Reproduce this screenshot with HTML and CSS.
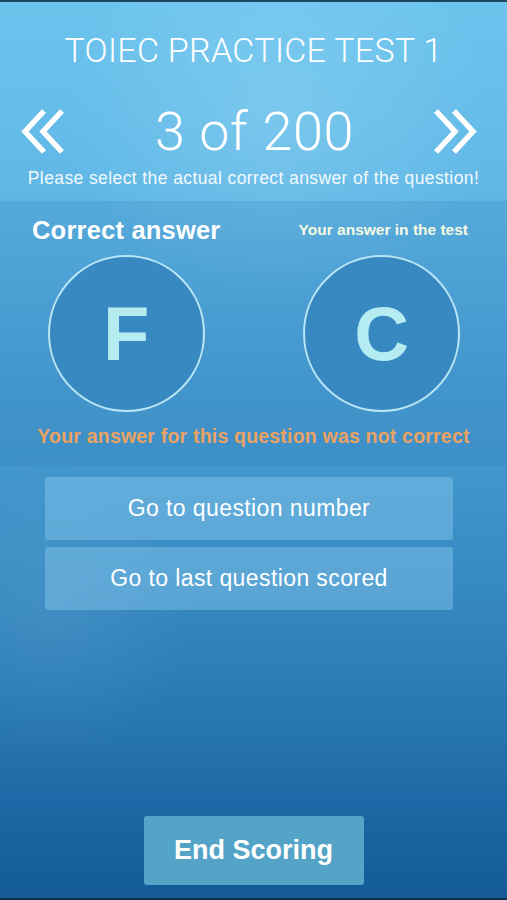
FILE: index.html
```html
<!DOCTYPE html>
<html lang="en">
<head>
<meta charset="utf-8">
<title>TOIEC Practice Test 1</title>
<link rel="stylesheet" href="styles.css">
</head>
<body>
<div class="screen">
  <h1 class="title">TOIEC PRACTICE TEST 1</h1>
  <div class="nav">
    <svg class="chev" viewBox="0 0 44 46" aria-hidden="true">
      <polyline points="22,2 3,22.5 22,43" />
      <polyline points="40,2 21,22.5 40,43" />
    </svg>
    <div class="count">3 of 200</div>
    <svg class="chev" viewBox="0 0 44 46" aria-hidden="true">
      <polyline points="4,2 23,22.5 4,43" />
      <polyline points="22,2 41,22.5 22,43" />
    </svg>
  </div>
  <p class="hint">Please select the actual correct answer of the question!</p>

  <section class="band">
    <div class="labels">
      <span class="label-main">Correct answer</span>
      <span class="label-sub">Your answer in the test</span>
    </div>
    <div class="answers">
      <div class="cell"><div class="circle">F</div></div>
      <div class="cell"><div class="circle">C</div></div>
    </div>
    <p class="verdict">Your answer for this question was not correct</p>
  </section>

  <div class="actions">
    <button class="btn">Go to question number</button>
    <button class="btn">Go to last question scored</button>
  </div>

  <div class="spacer"></div>

  <div class="end-wrap">
    <button class="end">End Scoring</button>
  </div>
</div>
</body>
</html>
```

FILE: styles.css
```css
html, body {
  margin: 0;
  padding: 0;
}

body {
  width: 507px;
  height: 900px;
  overflow: hidden;
  font-family: "Liberation Sans", Arial, sans-serif;
  color: #ffffff;
}

.screen {
  box-sizing: border-box;
  height: 900px;
  display: flex;
  flex-direction: column;
  border-top: 2px solid #1d4660;
  border-bottom: 2px solid #0c2f4d;
  background:
    radial-gradient(ellipse 60% 30% at 55% 12%, rgba(170, 225, 248, 0.3), rgba(170, 225, 248, 0) 70%),
    radial-gradient(ellipse 40% 25% at 10% 68%, rgba(120, 180, 220, 0.18), rgba(120, 180, 220, 0) 70%),
    linear-gradient(180deg, #6cc4ed 0%, #61b8e6 20%, #4a9fd4 42%, #3a8dc4 62%, #2a79b4 78%, #1a64a2 92%, #145b98 100%);
}

.title {
  margin: 28px 0 0;
  font-family: Roboto, "Liberation Sans", sans-serif;
  font-weight: 300;
  font-size: 34px;
  line-height: 40px;
  letter-spacing: 0.3px;
  text-align: center;
}

.nav {
  margin-top: 37px;
  display: flex;
  align-items: center;
  justify-content: space-between;
  padding: 0 30px 0 21px;
  height: 50px;
}

.chev {
  width: 46px;
  height: 46px;
  fill: none;
  stroke: #ffffff;
  stroke-width: 5.5;
  stroke-linecap: butt;
  stroke-linejoin: miter;
}

.count {
  margin-left: 11px;
  font-family: Roboto, "Liberation Sans", sans-serif;
  font-weight: 300;
  font-size: 54px;
  line-height: 50px;
  letter-spacing: 0.6px;
}

.hint {
  margin: 11px 0 0;
  font-size: 17.5px;
  letter-spacing: 0.4px;
  line-height: 20px;
  text-align: center;
  color: #f2f9fd;
}

.band {
  margin-top: 13px;
  height: 264px;
  box-sizing: border-box;
  background: rgba(30, 100, 160, 0.14);
  padding-top: 14px;
}

.labels {
  display: flex;
  justify-content: space-between;
  align-items: center;
  padding: 0 39px 0 32px;
}

.label-main {
  font-size: 25.5px;
  font-weight: bold;
  line-height: 30px;
  letter-spacing: 0.2px;
}

.label-sub {
  font-size: 15.5px;
  font-weight: bold;
  line-height: 20px;
  color: #f6fae2;
}

.answers {
  margin-top: 10px;
  display: grid;
  grid-template-columns: 1fr 1fr;
}

.cell {
  display: flex;
  justify-content: center;
}

.cell:first-child {
  padding-right: 1px;
}

.cell:last-child {
  padding-left: 3px;
}

.circle {
  width: 157px;
  height: 157px;
  box-sizing: border-box;
  border-radius: 50%;
  border: 2px solid #b8e6f4;
  background: #3889c2;
  color: #b4ecf1;
  font-size: 76px;
  font-weight: bold;
  display: flex;
  align-items: center;
  justify-content: center;
}

.verdict {
  margin: 13px 0 0;
  font-size: 19.5px;
  font-weight: bold;
  line-height: 22px;
  letter-spacing: 0.2px;
  text-align: center;
  color: #eaa263;
}

.actions {
  margin: 12px 54px 0 45px;
  display: flex;
  flex-direction: column;
  gap: 7px;
}

.btn {
  height: 63px;
  border: none;
  border-radius: 3px;
  background: rgba(140, 205, 240, 0.42);
  color: #ffffff;
  font-family: "Liberation Sans", Arial, sans-serif;
  font-size: 23px;
  letter-spacing: 0.4px;
  padding: 0;
}

.spacer {
  flex: 1;
}

.end-wrap {
  display: flex;
  justify-content: center;
  padding-bottom: 13px;
}

.end {
  width: 220px;
  height: 69px;
  border: none;
  border-radius: 3px;
  background: #54a4c8;
  color: #ffffff;
  font-family: "Liberation Sans", Arial, sans-serif;
  font-size: 27px;
  font-weight: bold;
  padding: 0;
}
```
